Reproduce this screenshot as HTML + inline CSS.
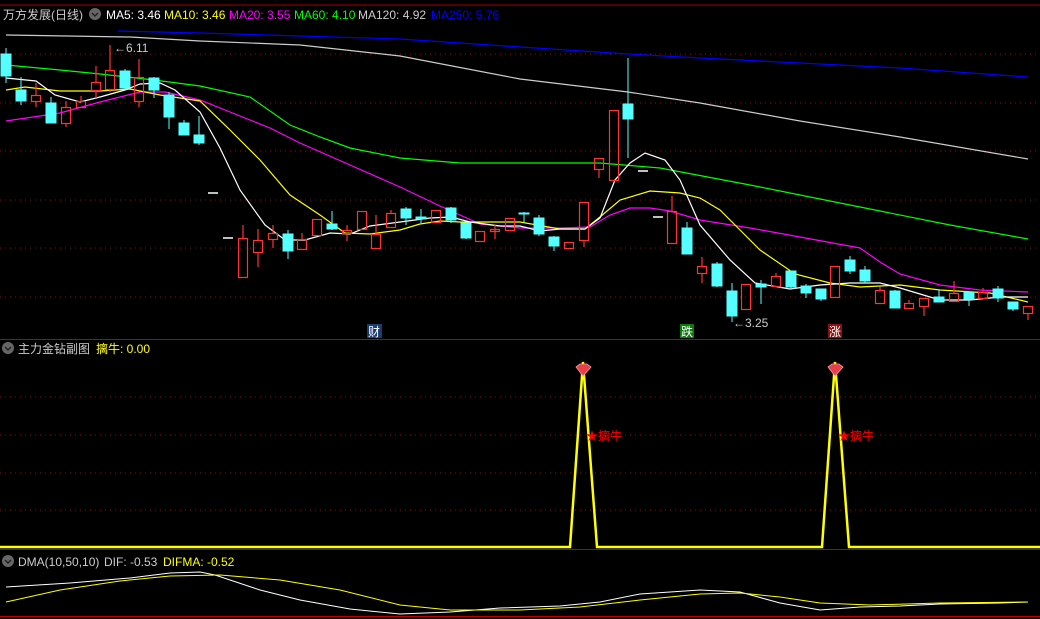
<!DOCTYPE html>
<html><head><meta charset="utf-8"><style>
html,body{margin:0;padding:0;background:#000;}
svg{display:block;}
text{font-family:"Liberation Sans","Noto Sans CJK SC",sans-serif;font-size:12px;}
</style></head><body>
<svg width="1040" height="619" viewBox="0 0 1040 619" xmlns="http://www.w3.org/2000/svg">
<rect width="1040" height="619" fill="#000"/>
<!-- top strip -->
<line x1="0" y1="5" x2="1040" y2="5" stroke="#a00" stroke-width="1"/>
<g stroke="#a00" stroke-dasharray="1,4">
<line x1="0" y1="54" x2="1040" y2="54"/><line x1="0" y1="103" x2="1040" y2="103"/>
<line x1="0" y1="151" x2="1040" y2="151"/><line x1="0" y1="200" x2="1040" y2="200"/>
<line x1="0" y1="248" x2="1040" y2="248"/><line x1="0" y1="297" x2="1040" y2="297"/>
<line x1="0" y1="397" x2="1040" y2="397"/><line x1="0" y1="435" x2="1040" y2="435"/>
<line x1="0" y1="473" x2="1040" y2="473"/><line x1="0" y1="510" x2="1040" y2="510"/>
</g>
<line x1="0" y1="339.5" x2="1040" y2="339.5" stroke="#b00"/>
<line x1="0" y1="549.5" x2="1040" y2="549.5" stroke="#b00"/>
<line x1="0" y1="616.5" x2="1040" y2="616.5" stroke="#b00"/>

<!-- headers -->
<circle cx="95" cy="14" r="6" fill="#666"/><path d="M92 13 l3 3 l3 -3" stroke="#222" fill="none" stroke-width="1.5"/>
<text x="3" y="19" fill="#ccc" font-size="13">万方发展(日线)</text>
<text x="106" y="19" fill="#fff">MA5: 3.46</text>
<text x="164" y="19" fill="#ff0">MA10: 3.46</text>
<text x="229" y="19" fill="#f0f">MA20: 3.55</text>
<text x="294" y="19" fill="#0f0">MA60: 4.10</text>
<text x="358" y="19" fill="#ccc">MA120: 4.92</text>
<text x="431" y="19" fill="#00f">MA250: 5.76</text>

<circle cx="8" cy="348" r="6" fill="#666"/><path d="M5 347 l3 3 l3 -3" stroke="#222" fill="none" stroke-width="1.5"/>
<text x="18" y="353" fill="#ccc" font-size="13">主力金钻副图</text>
<text x="96" y="353" fill="#ff0">摛牛: 0.00</text>

<circle cx="8" cy="561" r="6" fill="#666"/><path d="M5 560 l3 3 l3 -3" stroke="#222" fill="none" stroke-width="1.5"/>
<text x="18" y="566" fill="#ccc">DMA(10,50,10)</text>
<text x="104" y="566" fill="#ccc">DIF: -0.53</text>
<text x="163" y="566" fill="#ff0">DIFMA: -0.52</text>

<!-- MA lines -->
<g fill="none" stroke-width="1.2">
<polyline stroke="#00f" points="118,31 200,33 300,36 400,39 520,47 628,54 700,58 800,63 900,68 1028,77"/>
<polyline stroke="#ccc" points="6,35 130,37 200,41 300,45 400,56 520,79 628,92 700,103 800,121 900,137 1028,159"/>
<polyline stroke="#0f0" points="6,65 60,70 100,74 154,80 200,86 250,97 290,125 320,137 350,148 400,158 460,163 520,163 600,163 660,168 750,185 850,205 950,225 1028,239"/>
<polyline stroke="#f0f" points="6,121 60,113 100,102 140,92 165,92 200,100 230,112 270,128 300,143 350,165 400,187 440,206 460,215 480,224 520,228 560,228 590,227 610,215 630,208 650,208 670,211 700,220 750,228 800,237 860,248 880,262 900,274 940,285 980,290 1028,292"/>
<polyline stroke="#ff0" points="6,90 25,87 60,91 100,91 130,89 160,95 200,101 230,130 260,160 290,195 320,215 345,233 370,234 400,230 420,224 440,221 460,222 490,222 520,222 560,229 585,229 600,217 620,200 650,191 680,193 700,198 720,210 740,230 760,250 795,274 830,283 860,287 900,285 940,290 990,293 1028,302"/>
<polyline stroke="#fff" points="6,78 36,81 55,95 80,102 100,97 125,90 140,84 160,83 175,90 200,112 220,148 240,190 265,225 285,240 305,240 330,233 350,234 370,226 400,222 430,218 451,217 470,222 500,226 520,226 540,231 560,229 585,229 600,218 615,180 630,163 645,153 665,160 680,180 700,225 730,260 755,283 790,289 820,285 850,283 880,283 900,288 940,300 970,300 1000,297 1028,297"/>
</g>

<!-- candles: cyan filled, red hollow -->
<g stroke="#5ff" fill="#5ff">
<line x1="6" y1="48" x2="6" y2="83"/><rect x="1" y="54" width="10" height="22"/>
<line x1="21" y1="77" x2="21" y2="105"/><rect x="16" y="90" width="10" height="11"/>
<line x1="51" y1="97" x2="51" y2="123"/><rect x="46" y="103" width="10" height="20"/>
<line x1="125" y1="69" x2="125" y2="90"/><rect x="120" y="71" width="10" height="17"/>
<line x1="154" y1="77" x2="154" y2="98"/><rect x="149" y="78" width="10" height="12"/>
<line x1="169" y1="92" x2="169" y2="129"/><rect x="164" y="95" width="10" height="22"/>
<line x1="184" y1="120" x2="184" y2="135"/><rect x="179" y="123" width="10" height="12"/>
<line x1="199" y1="116" x2="199" y2="145"/><rect x="194" y="135" width="10" height="8"/>
<line x1="288" y1="230" x2="288" y2="259"/><rect x="283" y="234" width="10" height="17"/>
<line x1="332" y1="211" x2="332" y2="230"/><rect x="327" y="224" width="10" height="5"/>
<line x1="406" y1="207" x2="406" y2="225"/><rect x="401" y="209" width="10" height="9"/>
<line x1="421" y1="209" x2="421" y2="223"/><rect x="416" y="217" width="10" height="2"/>
<line x1="451" y1="207" x2="451" y2="223"/><rect x="446" y="208" width="10" height="12"/>
<line x1="466" y1="223" x2="466" y2="239"/><rect x="461" y="223" width="10" height="15"/>
<line x1="524" y1="212" x2="524" y2="223"/><rect x="519" y="213" width="10" height="1"/>
<line x1="539" y1="215" x2="539" y2="236"/><rect x="534" y="218" width="10" height="16"/>
<line x1="554" y1="236" x2="554" y2="251"/><rect x="549" y="237" width="10" height="9"/>
<line x1="628" y1="58" x2="628" y2="158"/><rect x="623" y="104" width="10" height="15"/>
<line x1="687" y1="222" x2="687" y2="254"/><rect x="682" y="228" width="10" height="26"/>
<line x1="717" y1="262" x2="717" y2="287"/><rect x="712" y="264" width="10" height="22"/>
<line x1="732" y1="283" x2="732" y2="322"/><rect x="727" y="291" width="10" height="25"/>
<line x1="761" y1="280" x2="761" y2="304"/><rect x="756" y="284" width="10" height="3"/>
<line x1="791" y1="271" x2="791" y2="289"/><rect x="786" y="271" width="10" height="16"/>
<line x1="806" y1="284" x2="806" y2="298"/><rect x="801" y="286" width="10" height="7"/>
<line x1="821" y1="289" x2="821" y2="301"/><rect x="816" y="289" width="10" height="10"/>
<line x1="850" y1="256" x2="850" y2="274"/><rect x="845" y="260" width="10" height="11"/>
<line x1="865" y1="266" x2="865" y2="283"/><rect x="860" y="270" width="10" height="11"/>
<line x1="895" y1="290" x2="895" y2="308"/><rect x="890" y="291" width="10" height="17"/>
<line x1="939" y1="290" x2="939" y2="302"/><rect x="934" y="297" width="10" height="5"/>
<line x1="969" y1="292" x2="969" y2="306"/><rect x="964" y="292" width="10" height="7"/>
<line x1="998" y1="286" x2="998" y2="302"/><rect x="993" y="289" width="10" height="9"/>
<line x1="1013" y1="302" x2="1013" y2="311"/><rect x="1008" y="302" width="10" height="7"/>
</g>
<g stroke="#f33" fill="none" stroke-width="1.2">
<line x1="36" y1="83" x2="36" y2="95"/><line x1="36" y1="101" x2="36" y2="107"/><rect x="31.5" y="95.5" width="9" height="6"/>
<line x1="66" y1="101" x2="66" y2="107"/><line x1="66" y1="123" x2="66" y2="127"/><rect x="61.5" y="107.5" width="9" height="16"/>
<line x1="81" y1="96" x2="81" y2="101"/><rect x="76.5" y="101.5" width="9" height="6"/>
<line x1="96" y1="66" x2="96" y2="82"/><line x1="96" y1="90" x2="96" y2="98"/><rect x="91.5" y="82.5" width="9" height="8"/>
<line x1="110" y1="45" x2="110" y2="70"/><line x1="110" y1="89" x2="110" y2="92"/><rect x="105.5" y="70.5" width="9" height="19"/>
<line x1="139" y1="59" x2="139" y2="77"/><line x1="139" y1="101" x2="139" y2="107"/><rect x="134.5" y="77.5" width="9" height="24"/>
<line x1="243" y1="225" x2="243" y2="238"/><rect x="238.5" y="238.5" width="9" height="39"/>
<line x1="258" y1="229" x2="258" y2="240"/><line x1="258" y1="252" x2="258" y2="267"/><rect x="253.5" y="240.5" width="9" height="12"/>
<line x1="273" y1="225" x2="273" y2="233"/><line x1="273" y1="239" x2="273" y2="248"/><rect x="268.5" y="233.5" width="9" height="6"/>
<line x1="302" y1="233" x2="302" y2="239"/><rect x="297.5" y="239.5" width="9" height="10"/>
<rect x="312.5" y="219.5" width="9" height="16"/>
<line x1="347" y1="225" x2="347" y2="230"/><line x1="347" y1="233" x2="347" y2="241"/><rect x="342.5" y="230.5" width="9" height="3"/>
<rect x="357.5" y="211.5" width="9" height="18"/>
<line x1="376" y1="215" x2="376" y2="234"/><rect x="371.5" y="234.5" width="9" height="14"/>
<line x1="391" y1="210" x2="391" y2="213"/><rect x="386.5" y="213.5" width="9" height="14"/>
<rect x="431.5" y="210.5" width="9" height="12"/>
<rect x="475.5" y="231.5" width="9" height="10"/>
<line x1="495" y1="225" x2="495" y2="239"/><rect x="490.5" y="229.5" width="9" height="2"/>
<rect x="505.5" y="218.5" width="9" height="12"/>
<rect x="564.5" y="242.5" width="9" height="6"/>
<rect x="579.5" y="202.5" width="9" height="38"/><line x1="584" y1="241" x2="584" y2="247"/>
<rect x="594.5" y="158.5" width="9" height="11"/><line x1="599" y1="170" x2="599" y2="178"/>
<rect x="609.5" y="110.5" width="9" height="70"/>
<line x1="672" y1="196" x2="672" y2="211"/><rect x="667.5" y="211.5" width="9" height="32"/>
<line x1="702" y1="257" x2="702" y2="266"/><line x1="702" y1="273" x2="702" y2="283"/><rect x="697.5" y="266.5" width="9" height="7"/>
<rect x="741.5" y="284.5" width="9" height="25"/>
<line x1="776" y1="273" x2="776" y2="276"/><rect x="771.5" y="276.5" width="9" height="10"/>
<rect x="830.5" y="266.5" width="9" height="31"/>
<line x1="880" y1="287" x2="880" y2="290"/><rect x="875.5" y="290.5" width="9" height="13"/>
<line x1="909" y1="300" x2="909" y2="303"/><rect x="904.5" y="303.5" width="9" height="5"/>
<line x1="924" y1="306" x2="924" y2="316"/><rect x="919.5" y="298.5" width="9" height="8"/>
<line x1="954" y1="281" x2="954" y2="293"/><rect x="949.5" y="293.5" width="9" height="8"/>
<line x1="983" y1="288" x2="983" y2="292"/><rect x="978.5" y="292.5" width="9" height="6"/>
<line x1="1028" y1="313" x2="1028" y2="320"/><rect x="1023.5" y="306.5" width="9" height="7"/>
</g>
<g stroke="#fff" stroke-width="1.5">
<line x1="208" y1="193" x2="218" y2="193"/><line x1="223" y1="238" x2="233" y2="238"/>
<line x1="638" y1="171" x2="648" y2="171"/><line x1="653" y1="217" x2="663" y2="217"/>
</g>
<text x="114" y="52" fill="#ccc">←6.11</text>
<text x="733" y="327" fill="#ccc">←3.25</text>
<rect x="367" y="324" width="15" height="14" fill="#1a3c6e"/><text x="368" y="336" fill="#fff">财</text>
<rect x="680" y="324" width="14" height="14" fill="#0a7a0a"/><text x="681" y="336" fill="#fff">跌</text>
<rect x="828" y="324" width="14" height="14" fill="#8a1010"/><text x="829" y="336" fill="#fff">涨</text>

<!-- sub chart -->
<polyline fill="none" stroke="#ff0" stroke-width="2.5" points="0,547 570,547 583,362 597,547 822,547 835,362 849,547 1040,547"/>
<g>
<path d="M576 367 L580 364 L587 364 L591 367 L583 376 Z" fill="#e8404a" stroke="#f99" stroke-width="0.8"/>
<path d="M828 367 L832 364 L839 364 L843 367 L835 376 Z" fill="#e8404a" stroke="#f99" stroke-width="0.8"/>
</g>
<text x="586" y="440" fill="#f00">★摛牛</text>
<text x="838" y="440" fill="#f00">★摛牛</text>

<!-- DMA -->
<g fill="none" stroke-width="1">
<polyline stroke="#fff" points="6,587 70,583 130,578 170,573 200,572 215,575 260,590 300,600 350,609 400,614 450,612 500,608 560,606 600,602 640,594 700,590 740,592 780,603 820,610 860,607 900,606 940,604 1000,603 1028,602"/>
<polyline stroke="#ff0" points="6,602 60,590 120,581 170,576 220,575 280,580 340,590 400,605 450,610 520,610 580,607 640,600 700,594 740,593 780,597 820,603 870,605 940,603 1028,602"/>
</g>
</svg>
</body></html>
